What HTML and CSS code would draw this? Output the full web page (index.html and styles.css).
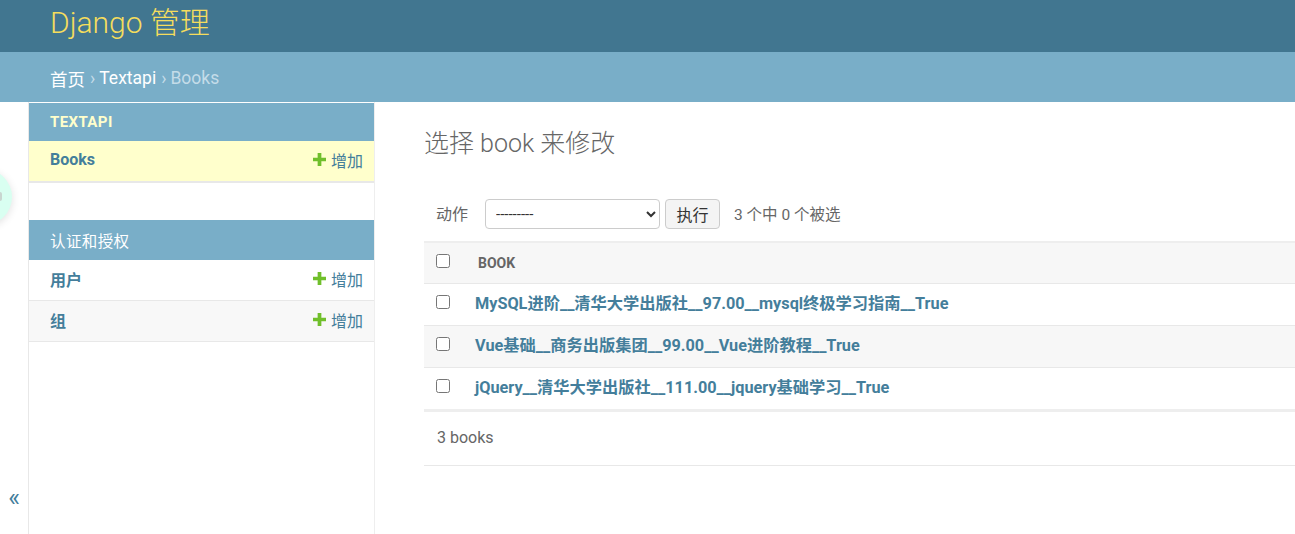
FILE: index.html
```html
<!DOCTYPE html>
<html lang="zh-hans">
<head>
<meta charset="utf-8">
<title>选择 book 来修改 | Django 站点管理员</title>
<link rel="stylesheet" href="styles.css">
</head>
<body>
<div class="bubble"><span class="bubble-dot"></span></div>
<header class="header">
  <h1 class="site-name">Django 管理</h1>
</header>
<nav class="breadcrumbs">
  <a href="#">首页</a><span class="sep">›</span><a href="#">Textapi</a><span class="sep">›</span><span class="crumb-current">Books</span>
</nav>
<div class="main">
  <button class="toggle" type="button">«</button>
  <aside class="sidebar">
    <div class="module current-app">
      <div class="caption">Textapi</div>
      <div class="row current-model">
        <a class="model" href="#">Books</a>
        <a class="add" href="#"><svg class="plus" viewBox="0 0 14 14" width="13" height="13"><path d="M5 0h4v5h5v4H9v5H5V9H0V5h5z" fill="#70bf2b"/></svg>增加</a>
      </div>
    </div>
    <div class="module">
      <div class="caption caption-plain">认证和授权</div>
      <div class="row">
        <a class="model" href="#">用户</a>
        <a class="add" href="#"><svg class="plus" viewBox="0 0 14 14" width="13" height="13"><path d="M5 0h4v5h5v4H9v5H5V9H0V5h5z" fill="#70bf2b"/></svg>增加</a>
      </div>
      <div class="row alt">
        <a class="model" href="#">组</a>
        <a class="add" href="#"><svg class="plus" viewBox="0 0 14 14" width="13" height="13"><path d="M5 0h4v5h5v4H9v5H5V9H0V5h5z" fill="#70bf2b"/></svg>增加</a>
      </div>
    </div>
  </aside>
  <section class="content">
    <h1 class="title">选择 book 来修改</h1>
    <div class="actions">
      <label class="actions-label">动作</label>
      <select class="action-select"><option>---------</option></select>
      <button class="go" type="button">执行</button>
      <span class="counter">3 个中 0 个被选</span>
    </div>
    <div class="results">
      <div class="tr thead">
        <div class="cb-cell"><input type="checkbox"></div>
        <div class="th-text">Book</div>
      </div>
      <div class="tr">
        <div class="cb-cell"><input type="checkbox"></div>
        <a class="rlink" href="#">MySQL进阶__清华大学出版社__97.00__mysql终极学习指南__True</a>
      </div>
      <div class="tr alt">
        <div class="cb-cell"><input type="checkbox"></div>
        <a class="rlink" href="#">Vue基础__商务出版集团__99.00__Vue进阶教程__True</a>
      </div>
      <div class="tr last">
        <div class="cb-cell"><input type="checkbox"></div>
        <a class="rlink" href="#">jQuery__清华大学出版社__111.00__jquery基础学习__True</a>
      </div>
    </div>
    <p class="paginator">3 books</p>
  </section>
</div>
</body>
</html>
```
FILE: styles.css
```css
html, body {
  margin: 0;
  padding: 0;
}
body {
  font-family: Roboto, "Noto Sans CJK SC", "Liberation Sans", sans-serif;
  color: #333;
  background: #fff;
  overflow: hidden;
  height: 534px;
}
a { text-decoration: none; }

.bubble {
  position: absolute;
  left: -44px;
  top: 169px;
  width: 56px;
  height: 56px;
  border-radius: 50%;
  background: #d9fff1;
  box-shadow: 0 2px 8px rgba(0, 0, 0, 0.12);
  z-index: 5;
}
.bubble-dot {
  position: absolute;
  right: 10px;
  top: 23px;
  width: 6px;
  height: 9px;
  border-radius: 2px;
  background: #c9d6d0;
}

.header {
  height: 52px;
  background: #417690;
  display: flex;
  align-items: center;
  padding: 0 51px;
  box-sizing: border-box;
}
.site-name {
  margin: 0 0 7px -1px;
  font-size: 30px;
  font-weight: 300;
  color: #f5dd5d;
  line-height: 36px;
}

.breadcrumbs {
  height: 50px;
  background: #79aec8;
  display: flex;
  align-items: center;
  padding: 2px 50px 0;
  box-sizing: border-box;
  font-size: 17.5px;
  color: #c4dce8;
}
.breadcrumbs a { color: #fff; }
.sep { margin: 0 4px 0 5px; color: #c4dce8; }
.crumb-current { color: #c4dce8; }

.main {
  display: flex;
  height: 432px;
}
.toggle {
  flex: 0 0 29px;
  width: 29px;
  border: 0;
  border-right: 1px solid #e8e8e8;
  background: #fff;
  padding: 0 0 24px 0;
  margin: 0;
  display: flex;
  align-items: flex-end;
  justify-content: center;
  font-size: 25px;
  line-height: 1;
  color: #447e9b;
  font-family: Roboto, sans-serif;
}
.sidebar {
  flex: 0 0 345px;
  border-right: 1px solid #eee;
  padding-top: 1px;
}
.module {
  margin-bottom: 38px;
}
.module.current-app { margin-bottom: 37px; }
.caption {
  height: 38px;
  background: #79aec8;
  color: #ffc;
  font-weight: 700;
  font-size: 15px;
  letter-spacing: 0.4px;
  text-transform: uppercase;
  display: flex;
  align-items: center;
  padding: 0 21px;
}
.caption-plain {
  color: #fff;
  font-weight: 400;
  height: 40px;
  font-size: 15.5px;
}
.row {
  height: 40px;
  display: flex;
  align-items: center;
  justify-content: space-between;
  padding: 0 11px 0 21px;
  border-bottom: 1px solid #e8e8e8;
}
.row > a { margin-top: -3px; }
.row.alt { background: #f8f8f8; }
.row.current-model { background: #ffc; border-bottom-width: 2px; }
.model {
  color: #447e9b;
  font-weight: 700;
  font-size: 16px;
}
.add {
  color: #447e9b;
  font-size: 16px;
  display: flex;
  align-items: center;
  gap: 5px;
}
.plus { display: block; }

.content {
  flex: 1;
  padding: 0 0 0 49px;
  min-width: 0;
}
.title {
  margin: 26px 0 0 0;
  font-size: 25px;
  font-weight: 300;
  color: #666;
  line-height: 32px;
}
.actions {
  margin-top: 39px;
  height: 30px;
  display: flex;
  align-items: center;
  padding-left: 12px;
  color: #666;
  font-size: 15.5px;
}
.actions > label, .actions > span { margin-top: -3px; }
.actions-label { margin-right: 17px; font-size: 16px; }
.action-select {
  width: 175px;
  height: 30px;
  border: 1px solid #ccc;
  border-radius: 4px;
  background: #fff;
  font-family: Roboto, sans-serif;
  font-size: 15px;
  color: #333;
  padding: 0 6px;
}
.go {
  margin-left: 5px;
  height: 30px;
  width: 55px;
  border: 1px solid #ccc;
  border-radius: 4px;
  background: #f4f4f4;
  font-family: Roboto, "Noto Sans CJK SC", sans-serif;
  font-size: 16px;
  color: #333;
  padding: 0;
}
.counter { margin-left: 14px; }

.results {
  margin-top: 12px;
  border-top: 2px solid #eee;
  border-bottom: 3px solid #eee;
}
.tr {
  height: 41px;
  display: flex;
  align-items: center;
  border-bottom: 1px solid #e8e8e8;
}
.tr > * { margin-top: -5px; }
.tr.last { border-bottom: 0; }
.tr.alt { background: #f7f7f7; }
.tr.thead { background: #f7f7f7; height: 40px; }
.tr.thead > * { margin-top: 0; }
.cb-cell {
  width: 51px;
  padding-left: 12px;
  box-sizing: border-box;
  display: flex;
  align-items: center;
}
.cb-cell input {
  margin: 0;
  width: 14px;
  height: 14px;
}
.thead .cb-cell { margin-top: -4px; }
.th-text {
  text-transform: uppercase;
  font-weight: 700;
  font-size: 14px;
  color: #666;
  padding-left: 3px;
}
.rlink {
  color: #447e9b;
  font-weight: 700;
  font-size: 16.25px;
}
.paginator {
  margin: 0;
  height: 54px;
  display: flex;
  align-items: center;
  padding-left: 13px;
  padding-bottom: 3px;
  box-sizing: border-box;
  font-size: 16px;
  color: #666;
  border-bottom: 1px solid #e8e8e8;
}
```
